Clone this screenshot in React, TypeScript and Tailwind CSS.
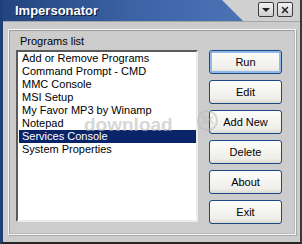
import { X } from "lucide-react";

const programs = [
  "Add or Remove Programs",
  "Command Prompt - CMD",
  "MMC Console",
  "MSI Setup",
  "My Favor MP3 by Winamp",
  "Notepad",
  "Services Console",
  "System Properties",
];

const buttons = ["Run", "Edit", "Add New", "Delete", "About", "Exit"];

function CaptionButton({ children }: { children: React.ReactNode }) {
  return (
    <div className="w-[16px] h-[15px] rounded-[2px] border border-[#3c3c3c] bg-[linear-gradient(to_bottom,#f2f2f2,#cfcfcf)] flex items-center justify-center">
      {children}
    </div>
  );
}

export default function App() {
  const selected = 6;

  return (
    <div className="relative w-[302px] h-[244px] overflow-hidden flex flex-col bg-[#cccccc] text-[11px] text-black font-['Liberation_Sans',Arial,sans-serif] border-l-[3px] border-l-[#1e3f7a] border-r-2 border-r-[#3a3a3a] border-b-2 border-b-[#262626]">
      <div className="h-[22px] shrink-0 flex bg-[#d0d0d0] border-b border-b-[#a4a4a4]">
        <div className="w-[240px] h-full pl-[12px] flex items-center bg-[linear-gradient(to_right,#22447f,#3c63a5_55%,#4b73b5)] [clip-path:polygon(0_0,219px_0,240px_100%,0_100%)]">
          <span className="text-white font-bold text-[13px] leading-none [text-shadow:1px_1px_0_#0b1a3c]">
            Impersonator
          </span>
        </div>
        <div className="flex-1 flex items-center justify-end gap-[3px] pr-[7px] pb-[2px]">
          <CaptionButton>
            <div className="w-0 h-0 border-l-[4px] border-r-[4px] border-t-[4px] border-l-transparent border-r-transparent border-t-[#222]" />
          </CaptionButton>
          <CaptionButton>
            <X className="w-[10px] h-[10px] text-[#222]" strokeWidth={3.5} />
          </CaptionButton>
        </div>
      </div>

      <div className="flex-1 pt-[7px] pl-[5px]">
        <div className="w-[288px] h-[206px] border border-[#f8f8f8] shadow-[inset_-1px_-1px_0_#a8a8a8,1px_1px_0_#a8a8a8]">
          <div className="w-full h-full border border-[#b8b8b8] border-t-[#9c9c9c] border-l-[#9c9c9c] pl-[6px] pt-[4px] flex flex-col">
            <div className="h-[13px] leading-[13px] ml-[4px]">Programs list</div>
            <div className="mt-[2px] flex gap-[11px]">
              <div className="w-[182px] h-[172px] bg-white border-2 border-t-[#5a5a5a] border-l-[#5a5a5a] border-b-[#ececec] border-r-[#ececec]">
                <div className="pl-[1px]">
                  {programs.map((p, i) => (
                    <div
                      key={p}
                      className={`h-[13px] leading-[13px] pl-[3px] whitespace-nowrap ${i === selected ? "bg-[#0a246a] text-white" : ""}`}
                    >
                      {p}
                    </div>
                  ))}
                </div>
              </div>
              <div className="flex flex-col gap-[6px]">
                {buttons.map((b, i) => (
                  <button
                    key={b}
                    className={`w-[73px] h-[24px] rounded-[3px] border border-[#1b4784] bg-[linear-gradient(to_bottom,#fdfdfb,#efeee9_80%,#d9d8d1)] text-[11px] leading-none ${i === 0 ? "shadow-[inset_0_0_0_2px_#93b8ec]" : ""}`}
                  >
                    {b}
                  </button>
                ))}
              </div>
            </div>
          </div>
        </div>
      </div>

      {/* download3k watermark */}
      <span className="absolute left-[81px] top-[122px] text-[19px] font-black text-[#bdbdbd] leading-[6px] opacity-60 pointer-events-none">
        download
      </span>
      <span className="absolute left-[194px] top-[110px] w-[21px] h-[21px] rounded-full border-2 border-[#bdbdbd] text-[#bdbdbd] text-[10px] font-black flex items-center justify-center leading-none opacity-60 pointer-events-none">
        3K
      </span>
    </div>
  );
}
